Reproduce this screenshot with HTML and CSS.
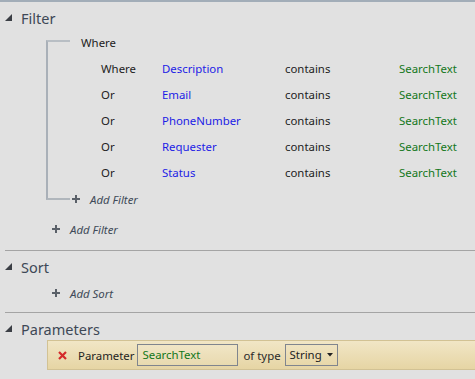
FILE: index.html
```html
<!DOCTYPE html>
<html>
<head>
<meta charset="utf-8">
<link rel="stylesheet" href="styles.css">
</head>
<body>
<div class="page">
  <section class="section filter">
    <div class="head"><svg class="tri" width="7" height="7" viewBox="0 0 7 7"><polygon points="7,0 7,7 0,7" fill="#3b3f45"/></svg><span>Filter</span></div>
    <div class="group">
      <div class="bracket"></div>
      <div class="row where-head">Where</div>
      <div class="conds">
        <span>Where</span><span class="field">Description</span><span>contains</span><span class="val">SearchText</span>
        <span>Or</span><span class="field">Email</span><span>contains</span><span class="val">SearchText</span>
        <span>Or</span><span class="field">PhoneNumber</span><span>contains</span><span class="val">SearchText</span>
        <span>Or</span><span class="field">Requester</span><span>contains</span><span class="val">SearchText</span>
        <span>Or</span><span class="field">Status</span><span>contains</span><span class="val">SearchText</span>
      </div>
      <div class="row add inner-add"><svg class="plus" width="8" height="8" viewBox="0 0 8 8"><path d="M4 0V8M0 4H8" stroke="#5a6068" stroke-width="2"/></svg><em>Add Filter</em></div>
    </div>
    <div class="row add outer-add"><svg class="plus" width="8" height="8" viewBox="0 0 8 8"><path d="M4 0V8M0 4H8" stroke="#5a6068" stroke-width="2"/></svg><em>Add Filter</em></div>
  </section>
  <section class="section sort">
    <div class="head"><svg class="tri" width="7" height="7" viewBox="0 0 7 7"><polygon points="7,0 7,7 0,7" fill="#3b3f45"/></svg><span>Sort</span></div>
    <div class="row add outer-add"><svg class="plus" width="8" height="8" viewBox="0 0 8 8"><path d="M4 0V8M0 4H8" stroke="#5a6068" stroke-width="2"/></svg><em>Add Sort</em></div>
  </section>
  <section class="section params">
    <div class="head"><svg class="tri" width="7" height="7" viewBox="0 0 7 7"><polygon points="7,0 7,7 0,7" fill="#3b3f45"/></svg><span>Parameters</span></div>
    <div class="param-bar">
      <svg class="x" width="9" height="9" viewBox="0 0 9 9"><path d="M1 1L8 8M8 1L1 8" stroke="#d42a2a" stroke-width="2.2"/></svg>
      <span class="plabel">Parameter</span>
      <span class="pinput">SearchText</span>
      <span class="oftype">of type</span>
      <span class="pselect">String<svg width="6" height="4" viewBox="0 0 6 4"><polygon points="0,0 6,0 3,3.5" fill="#222"/></svg></span>
    </div>
  </section>
</div>
</body>
</html>
```
FILE: styles.css
```css
html, body {
  margin: 0;
  padding: 0;
}
body {
  background: #e1e1e1;
  width: 475px;
  height: 379px;
  overflow: hidden;
  font-family: "Noto Sans", "Open Sans", sans-serif;
  font-size: 11.4px;
  color: #222;
}
.page {
  border-top: 2px solid #a2adb8;
}
.head {
  display: flex;
  align-items: center;
  height: 22px;
  padding-left: 5px;
  font-size: 14.5px;
  color: #3e4856;
}
.head .tri {
  margin-right: 9px;
  margin-top: -1px;
}
.filter .head { padding-top: 5px; }
.section + .section {
  border-top: 1px solid #a4a4a4;
  margin-left: 5px;
}
.section + .section .head { padding-left: 0; }
.sort .head { padding-top: 5px; }
.params .head { padding-top: 5px; }

.row {
  height: 26px;
  display: flex;
  align-items: center;
}
.group {
  display: grid;
  grid-template-columns: 35px 1fr;
  margin-left: 46px;
  margin-top: 0;
}
.bracket {
  grid-column: 1;
  grid-row: 1 / 4;
  margin: 11px 0 12px 0;
  width: 22px;
  border: 2px solid #a9b0b8;
  border-right: none;
  border-top-color: #b8bec4;
  border-bottom-color: #b0b6bc;
}
.where-head { grid-column: 2; grid-row: 1; }
.conds {
  grid-column: 2;
  grid-row: 2;
  display: grid;
  grid-template-columns: 61px 123px 114px auto;
  grid-auto-rows: 26px;
  align-items: center;
  padding-left: 20px;
}
.field { color: #1c1ce6; }
.val { color: #12771a; }
.inner-add {
  grid-column: 1 / 3;
  grid-row: 3;
  padding-left: 26px;
  margin-top: 1px;
}
.add em {
  font-style: italic;
  color: #404a58;
}
.plus { margin-right: 10px; }
.outer-add {
  padding-left: 52px;
  margin-top: 4px;
  margin-bottom: 8px;
}
.sort .outer-add {
  margin-top: 2px;
  margin-bottom: 6px;
  padding-left: 47px;
}
.param-bar {
  margin-left: 42px;
  height: 28px;
  display: flex;
  align-items: center;
  background: linear-gradient(#f1e6c6, #e6d5a4);
  border: 1px solid #d2c294;
  border-right: none;
  padding-left: 10px;
}
.x { margin-right: 11px; }
.plabel { color: #1e1e1e; margin-right: 3px; }
.pinput {
  width: 95px;
  height: 20px;
  line-height: 20px;
  border: 1px solid #80858e;
  padding-left: 4px;
  color: #12771a;
  background: rgba(255,255,255,0.08);
}
.oftype { margin: 0 4px 0 5px; color: #2a2a2a; }
.pselect {
  width: 43px;
  height: 20px;
  line-height: 20px;
  border: 1px solid #80858e;
  padding-left: 4px;
  display: flex;
  align-items: center;
  justify-content: space-between;
  padding-right: 4px;
}
```
